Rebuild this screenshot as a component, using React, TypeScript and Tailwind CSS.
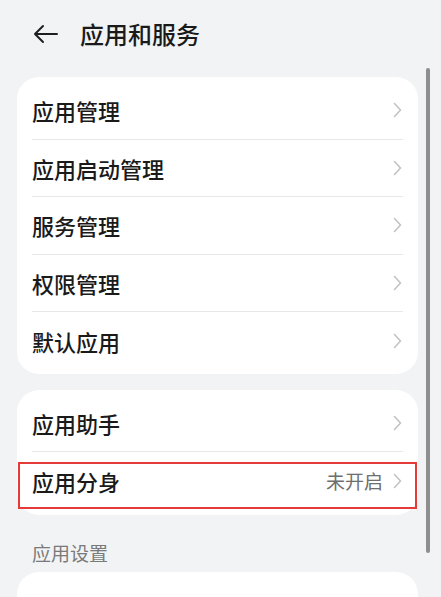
const font = { fontFamily: '"Noto Sans CJK SC", "Noto Sans", sans-serif' };

function Chevron() {
  return (
    <svg width="9" height="16" viewBox="0 0 9 16" fill="none" className="shrink-0">
      <path d="M1.5 1.5 L7.5 8 L1.5 14.5" stroke="#c2c2c2" strokeWidth="1.6" strokeLinecap="round" strokeLinejoin="round" />
    </svg>
  );
}

function Row({
  label,
  value,
  divider,
  highlight,
}: {
  label: string;
  value?: string;
  divider?: boolean;
  highlight?: boolean;
}) {
  return (
    <div className="relative h-[57.5px] px-[15px]">
      <div className={`flex h-full items-center justify-between ${divider ? "border-b border-[#e8e8e8]" : ""}`}>
        <span className="text-[22px] font-medium text-[#1a1a1a] leading-none">{label}</span>
        <div className="flex items-center gap-[10px] pr-[1px]">
          {value && <span className="text-[19px] text-[#6e6e6e] leading-none">{value}</span>}
          <Chevron />
        </div>
      </div>
      {highlight && (
        <div className="absolute left-[1px] right-[1px] top-[9.5px] bottom-[1px] border-2 border-[#e53a3a]" />
      )}
    </div>
  );
}

export default function App() {
  return (
    <div className="relative h-[597px] w-[441px] overflow-hidden bg-[#f1f3f5]" style={font}>
      {/* header */}
      <div className="flex h-[67px] items-center pl-[33px]">
        <svg width="25" height="20" viewBox="0 0 25 20" fill="none">
          <path d="M10 2 L2 10 L10 18 M2 10 H24" stroke="#1f1f1f" strokeWidth="2" strokeLinecap="round" strokeLinejoin="round" />
        </svg>
        <span className="ml-[22px] text-[24px] font-medium text-[#1a1a1a] leading-none">应用和服务</span>
      </div>

      <div className="mt-[10px] ml-[17px] w-[401px] rounded-[22px] bg-white pt-[5px] pb-[4px]">
        <Row label="应用管理" divider />
        <Row label="应用启动管理" divider />
        <Row label="服务管理" divider />
        <Row label="权限管理" divider />
        <Row label="默认应用" />
      </div>

      <div className="mt-[16px] ml-[17px] w-[401px] rounded-[22px] bg-white pt-[5px] pb-[5px]">
        <Row label="应用助手" divider />
        <Row label="应用分身" value="未开启" highlight />
      </div>

      <div className="flex h-[57px] items-end pb-[10px] pl-[32px]">
        <span className="text-[19px] text-[#7a7a7a] leading-none">应用设置</span>
      </div>

      <div className="ml-[17px] h-[60px] w-[401px] rounded-[22px] bg-white" />

      {/* scrollbar */}
      <div className="absolute left-[426px] top-[68px] h-[485px] w-[3.5px] rounded-full bg-[#8e8e8e]" />
    </div>
  );
}
